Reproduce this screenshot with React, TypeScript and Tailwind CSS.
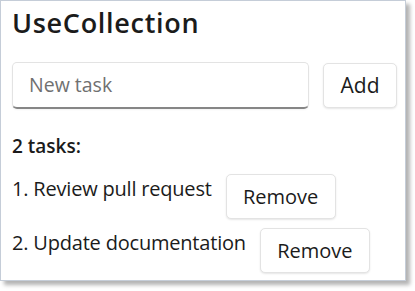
import React from "react";

export default function App() {
  const tasks = ["Review pull request", "Update documentation"];
  return (
    <div className="w-[415px] h-[291px] bg-white" style={{ fontFamily: '"Open Sans", "Noto Sans", sans-serif' }}>
      <div className="w-[406px] h-[281px] bg-white border border-[#c5cdd8] shadow-[4px_4px_4px_rgba(0,0,0,0.3)] pl-[11px] pt-[5px] text-[#1b1b1b]">
        <h1 className="text-[27px] font-semibold leading-[34px] tracking-[0.7px]">UseCollection</h1>
        <div className="flex gap-[14px] mt-[22px] items-center">
          <div className="w-[297px] h-[47px] rounded-[5px] border border-[#e3e3e3] border-b-[2px] border-b-[#868686] flex items-center pl-[16px] text-[19.5px] text-[#707070] shadow-[0_1px_2px_rgba(0,0,0,0.05)]">
            New task
          </div>
          <button className="w-[74px] h-[45px] rounded-[5px] border border-[#e3e3e3] bg-white text-[21px] shadow-[0_1px_2px_rgba(0,0,0,0.1)]">
            Add
          </button>
        </div>
        <div className="mt-[24px] text-[19px] font-semibold leading-[26px]">2 tasks:</div>
        <div className="mt-[15px] flex flex-col gap-[9px]">
          {tasks.map((t, i) => (
            <div key={t} className="flex items-start gap-[14px]">
              <span className="mt-[2px] text-[20px] leading-[26px] tracking-[-0.2px]">{i + 1}. {t}</span>
              <button className="w-[110px] h-[45px] rounded-[5px] border border-[#e3e3e3] bg-white text-[20px] shadow-[0_1px_2px_rgba(0,0,0,0.1)]">
                Remove
              </button>
            </div>
          ))}
        </div>
      </div>
    </div>
  );
}
